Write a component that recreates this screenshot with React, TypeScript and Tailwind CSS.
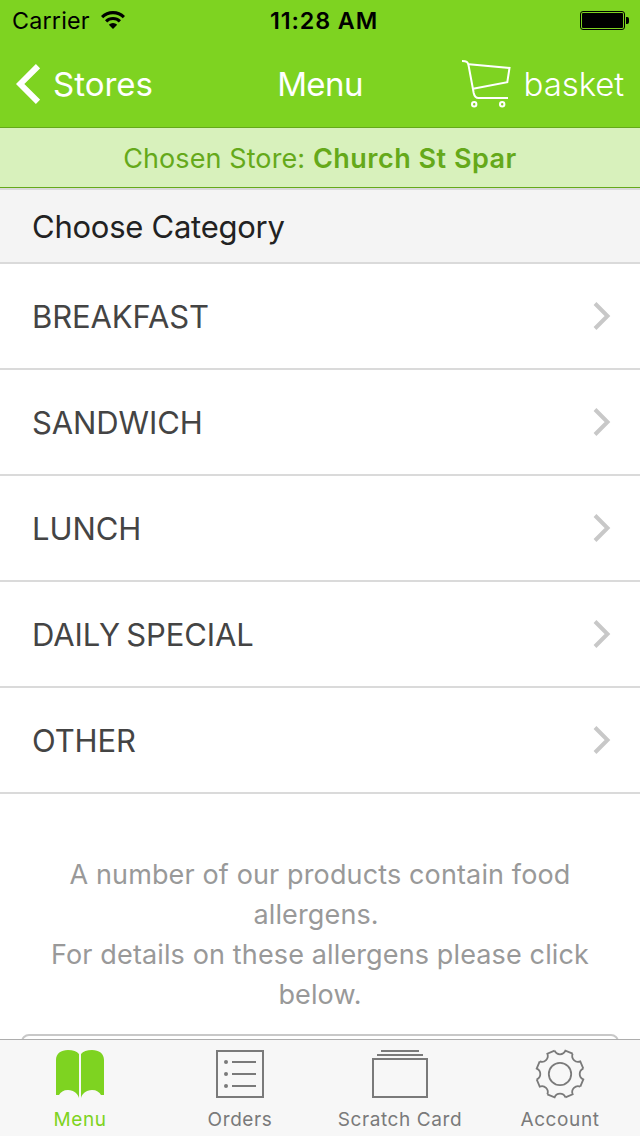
const categories = ["BREAKFAST", "SANDWICH", "LUNCH", "DAILY SPECIAL", "OTHER"];

const gearAngles = [0, 45, 90, 135, 180, 225, 270, 315];

function StatusBar() {
  return (
    <div className="grid h-10 grid-cols-3 items-center pl-3 pr-[11px] text-black">
      <div className="flex items-center gap-[11px]">
        <span className="pt-0.5 text-[23.3px] leading-[38px] tracking-[0.2px]">Carrier</span>
        <svg className="h-[18px] w-6" viewBox="0 0 24 18" fill="none" stroke="#000" strokeWidth="3.1">
          <path d="M1.1 6.1a15.4 15.4 0 0 1 21.8 0" />
          <path d="M5.1 10.3a9.8 9.8 0 0 1 13.8 0" />
          <path d="M12 18l-4.2-4.2a6 6 0 0 1 8.4 0z" fill="#000" stroke="none" />
        </svg>
      </div>
      <span className="whitespace-nowrap pl-[7px] pt-0.5 text-center text-[23.3px] font-semibold leading-[38px] tracking-[0.9px]">11:28 AM</span>
      <svg className="h-[19px] w-[49px] justify-self-end" viewBox="0 0 49 19">
        <rect x="0.5" y="0.5" width="44" height="18" rx="2.5" fill="none" stroke="#000" />
        <rect x="2" y="2" width="41" height="15" rx="1" />
        <path d="M46 6h1.2a2 2 0 0 1 1.8 2v3a2 2 0 0 1-1.8 2H46z" />
      </svg>
    </div>
  );
}

function NavBar() {
  return (
    <div className="grid h-[87px] grid-cols-3 items-center pl-4 pr-4 text-[33px] leading-[50px] font-[370] text-white">
      <button className="flex items-center gap-[13px]">
        <svg className="h-10 w-6" viewBox="0 0 24 40" fill="none" stroke="#fff" strokeWidth="6">
          <path d="M22 2.2 4.2 20 22 37.8" />
        </svg>
        <span className="pt-px">Stores</span>
      </button>
      <h1 className="pt-px text-center tracking-[-0.6px]">Menu</h1>
      <button className="flex items-center gap-3 justify-self-end">
        <svg className="h-[49px] w-[50px] overflow-visible" viewBox="0 0 50 49" fill="none" stroke="#fff" strokeWidth="2">
          <path d="M0 2c4.500 0 6 .8 6.600 4.600L11.700 34c.7 3.300 1.800 5 4.800 5h29.500" />
          <path d="M7 5.300 47.500 9 45.300 23.200 11.100 29.800" />
          <circle cx="12.200" cy="45.300" r="2.200" />
          <circle cx="40.200" cy="45.300" r="2.200" />
        </svg>
        <span className="pt-px font-light tracking-[-0.1px]">basket</span>
      </button>
    </div>
  );
}

function MenuIcon() {
  return (
    <svg className="size-12" viewBox="0 0 48 48" fill="currentColor">
      <path d="M23 4v44c-1-4-5-8-11-8-4.500 0-7.500 2-9 5H0V10C0 3.500 5 0 12 0c5 0 9 1.500 11 4z" />
      <path d="M25 4v44c1-4 5-8 11-8 4.500 0 7.500 2 9 5h3V10C48 3.500 43 0 36 0c-5 0-9 1.500-11 4z" />
    </svg>
  );
}

function OrdersIcon() {
  return (
    <svg className="size-12" viewBox="0 0 48 48" fill="none" stroke="currentColor" strokeWidth="2">
      <path d="M1 1h46v46H1zM16 12h24M16 24h24M16 36h24" />
      <g fill="currentColor" stroke="none">
        <circle cx="10" cy="12" r="2" />
        <circle cx="10" cy="24" r="2" />
        <circle cx="10" cy="36" r="2" />
      </g>
    </svg>
  );
}

function CardIcon() {
  return (
    <svg className="h-12 w-14" viewBox="0 0 56 48" fill="none" stroke="currentColor" strokeWidth="2">
      <path d="M9 1h38M5 5h46M1 9h54v38H1z" />
    </svg>
  );
}

function GearIcon() {
  return (
    <svg className="size-12 overflow-visible" viewBox="-24 -24 48 48" fill="none" stroke="currentColor" strokeWidth="1.8">
      <circle r="11.2" />
      {gearAngles.map((a) => (
        <path key={a} d="M-5.400 -23.300A5.850 5.850 0 0 0 5.400 -23.300L12.660 -20.300" transform={`rotate(${a})`} />
      ))}
    </svg>
  );
}

const tabs = [
  { label: "Menu", icon: <MenuIcon />, color: "text-[#7ed321]" },
  { label: "Orders", icon: <OrdersIcon />, color: "text-[#7a7a7a]" },
  { label: "Scratch Card", icon: <CardIcon />, color: "text-[#7a7a7a]" },
  { label: "Account", icon: <GearIcon />, color: "text-[#7a7a7a]" },
];

function App() {
  return (
    <div className="flex h-[1136px] w-[640px] flex-col overflow-hidden bg-white font-['Inter',sans-serif]">
      <header className="h-32 shrink-0 border-b border-[#65a91a] bg-[#7ed321]">
        <StatusBar />
        <NavBar />
      </header>

      <div className="h-[60px] shrink-0 border-b border-[#65a91a] bg-[#d8f1bc] text-center text-[27px] leading-[61px] tracking-[0.1px] text-[#65a91a]">
        Chosen Store: <b className="font-semibold tracking-[0.5px]">Church St Spar</b>
      </div>

      <main className="min-h-0 flex-1 overflow-hidden">
        <h2 className="h-[76px] border-y-2 border-[#dadada] bg-[#f4f4f4] px-8 text-[31px] leading-[74px] tracking-[-0.25px] text-[#222]">
          Choose Category
        </h2>
        <ul>
          {categories.map((name) => (
            <li key={name} className="flex h-[106px] items-center justify-between border-b-2 border-[#dadada] pl-8 pr-[29px] text-[31px] font-[380] tracking-[-0.1px] text-[#444]">
              <span className="pt-0.5 [word-spacing:-2.5px]">{name}</span>
              <svg className="h-7 w-[18px]" viewBox="0 0 18 28" fill="none" stroke="#c8c8c8" strokeWidth="4">
                <path d="M2 1.500 14.500 14 2 26.500" />
              </svg>
            </li>
          ))}
        </ul>
        <p className="px-8 pt-[61px] text-center text-[27px] leading-10 tracking-[0.13px] text-[#999]">
          A number of our products contain food
          <br />
          allergens.&nbsp;
          <br />
          For details on these allergens please click
          <br />
          below.
        </p>
        <div className="mx-[21px] mt-[19px] h-20 rounded-lg border-2 border-[#c8c8c8]" />
      </main>

      <nav className="grid h-[97px] shrink-0 grid-cols-4 border-t border-[#adadad] bg-[#f7f7f7]">
        {tabs.map((tab) => (
          <button key={tab.label} className={`flex flex-col items-center pt-2.5 ${tab.color}`}>
            {tab.icon}
            <span className="mt-2 whitespace-nowrap text-[19px] leading-7 tracking-[0.6px]">{tab.label}</span>
          </button>
        ))}
      </nav>
    </div>
  );
}

export default App;
